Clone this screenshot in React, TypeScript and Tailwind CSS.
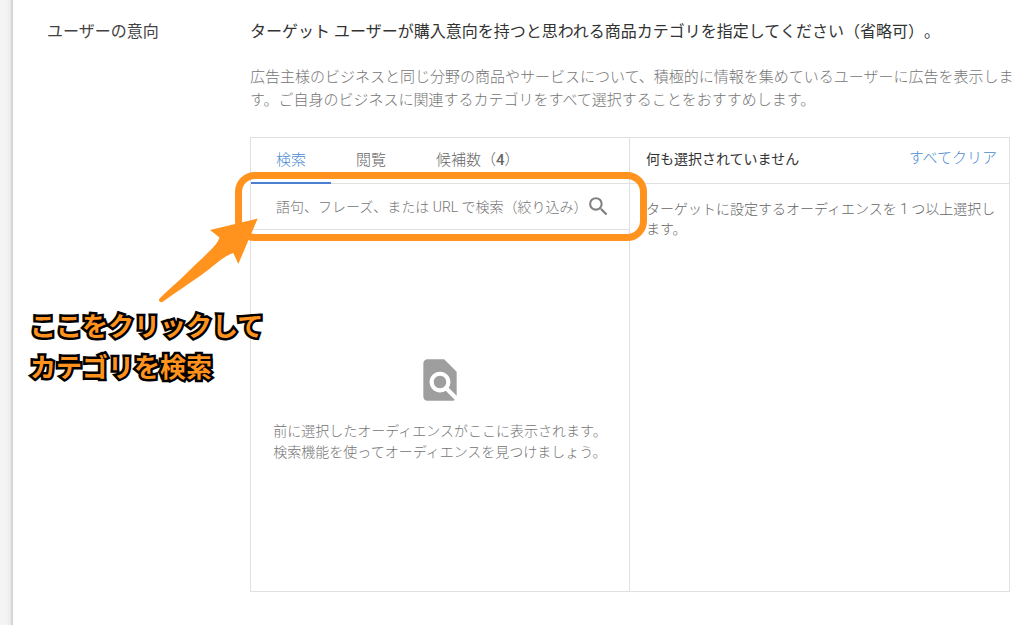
import { useState } from "react";
import { MdFindInPage, MdSearch } from "react-icons/md";

const tabs = [
  { label: "検索" },
  { label: "閲覧" },
  { label: "候補数", count: 4 },
];

/* orange marker, arrow and note laid over the search row */
function SearchCallout() {
  return (
    <div className="pointer-events-none absolute inset-0 z-10">
      <div className="absolute -inset-y-3 -left-4 -right-[18px] rounded-[20px] border-[7px] border-[#ff931e]" />
      <svg
        className="absolute top-8 -left-[95px]"
        width="104"
        height="90"
        viewBox="156 216 104 90"
        fill="#ff931e"
        aria-hidden="true"
      >
        <path d="M257.7 218.5 L210 230 L219.5 237.5 C217 246 205 255 191 269 C180 280 167 291 159.6 298.5 C157.8 300.8 160.4 303.2 162.8 301.8 C175 293 187 285 200 276 C213 267 223 256 233.3 253 L238.3 264 Z" />
      </svg>
      <p className="absolute top-[123px] -left-[221px] whitespace-nowrap text-[26px] leading-[41px] font-bold text-[#ff931e] [-webkit-text-stroke:5px_black] [paint-order:stroke_fill] [stroke-linejoin:round]">
        ここをクリックして
        <br />
        カテゴリを検索
      </p>
    </div>
  );
}

function AudiencePicker() {
  const [active, setActive] = useState(0);
  const [query, setQuery] = useState("");

  return (
    <div className="grid min-h-[455px] grid-cols-2 border border-[#e0e0e0]">
      <div className="flex flex-col border-r border-[#e0e0e0]">
        <div className="flex h-[46px] border-b border-[#e0e0e0]" role="tablist">
          {tabs.map((tab, i) => (
            <button
              key={tab.label}
              role="tab"
              aria-selected={i === active}
              onClick={() => setActive(i)}
              className={`-mb-px border-b-2 px-[25px] text-[15px] ${
                i === active
                  ? "border-[#4a80d0] text-[#4a8ad0]"
                  : "border-transparent text-[#666666]"
              }`}
            >
              {tab.label}
              {tab.count && (
                <>
                  （<span className="font-medium">{tab.count}</span>）
                </>
              )}
            </button>
          ))}
        </div>

        <div className="relative flex h-[46px] items-center border-b border-[#e0e0e0] pl-[25px] pr-[18px]">
          <input
            type="text"
            aria-label="オーディエンスを検索"
            placeholder="語句、フレーズ、または URL で検索（絞り込み）"
            value={query}
            onChange={(e) => setQuery(e.target.value)}
            className="min-w-0 flex-1 text-sm text-[#424242] outline-none placeholder:text-[#757575]"
          />
          <button aria-label="検索" className="shrink-0">
            <MdSearch className="size-[25px] text-[#808080]" />
          </button>
          <SearchCallout />
        </div>

        <div className="flex flex-col items-center pt-[125px]">
          <MdFindInPage className="size-[50px] text-[#9e9e9e]" />
          <p className="mt-4 whitespace-nowrap text-sm leading-[21px] text-[#757575]">
            前に選択したオーディエンスがここに表示されます。
            <br />
            検索機能を使ってオーディエンスを見つけましょう。
          </p>
        </div>
      </div>

      <div>
        <div className="flex h-[46px] items-center justify-between border-b border-[#e0e0e0] pb-1 pl-4 pr-3">
          <h3 className="text-sm font-normal text-[#333333]">何も選択されていません</h3>
          <button className="text-[15px] text-[#4a8ad0]">すべてクリア</button>
        </div>
        <p className="pt-[15px] pl-4 pr-3 text-sm leading-5 text-[#666666]">
          ターゲットに設定するオーディエンスを 1 つ以上選択します。
        </p>
      </div>
    </div>
  );
}

export default function App() {
  return (
    <div
      lang="ja"
      className="flex min-h-screen bg-white font-['Roboto','Noto_Sans_CJK_JP',sans-serif] font-light [text-spacing-trim:space-all]"
    >
      <div className="w-[13px] shrink-0 border-r-2 border-[#d6d6d6] bg-linear-to-r from-[#f4f4f4] from-60% to-[#e8e8e8]" />
      <main className="flex min-w-0 flex-1 pt-5 pr-[14px] pb-8 pl-[34px]">
        <h1 className="w-[203px] shrink-0 text-base font-normal text-[#424242]">
          ユーザーの意向
        </h1>
        <section className="min-w-0 flex-1">
          <h2 className="whitespace-nowrap text-base font-normal text-[#333333]">
            ターゲット ユーザーが購入意向を持つと思われる商品カテゴリを指定してください（省略可）。
          </h2>
          <p className="mt-[22px] mb-[25px] whitespace-nowrap text-[15px] leading-[23px] text-[#757575]">
            広告主様のビジネスと同じ分野の商品やサービスについて、積極的に情報を集めているユーザーに広告を表示しま
            <br />
            す。ご自身のビジネスに関連するカテゴリをすべて選択することをおすすめします。
          </p>
          <AudiencePicker />
        </section>
      </main>
    </div>
  );
}
